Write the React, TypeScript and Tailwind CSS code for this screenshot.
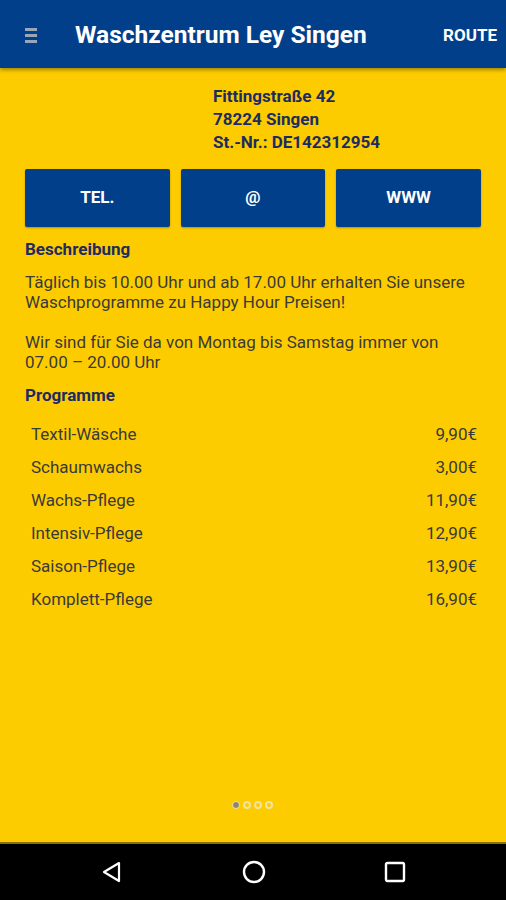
import React from 'react';

const programme: [string, string][] = [
  ['Textil-Wäsche', '9,90€'],
  ['Schaumwachs', '3,00€'],
  ['Wachs-Pflege', '11,90€'],
  ['Intensiv-Pflege', '12,90€'],
  ['Saison-Pflege', '13,90€'],
  ['Komplett-Pflege', '16,90€'],
];

const App: React.FC = () => {
  return (
    <div className="flex h-[900px] w-[506px] flex-col bg-[#fdcc00] font-['Roboto',sans-serif]">
      {/* toolbar */}
      <div className="relative z-10 flex h-[68px] items-center bg-[#023f8a] pt-[3px] shadow-[0_2px_4px_rgba(0,0,0,0.35)]">
        <div className="ml-[25px] flex w-[12px] flex-col gap-[3px]">
          <span className="h-[3px] bg-[#9aa5b8]" />
          <span className="h-[3px] bg-[#9aa5b8]" />
          <span className="h-[3px] bg-[#9aa5b8]" />
        </div>
        <h1 className="ml-[38px] text-[24.5px] font-bold text-white">Waschzentrum Ley Singen</h1>
        <span className="ml-auto mr-[9px] text-[17px] font-bold text-white">ROUTE</span>
      </div>

      <div className="flex flex-1 flex-col px-[25px]">
        <div className="ml-[188px] mt-[17px] text-[17px] font-bold leading-[23px] text-[#1d2b63]">
          <div>Fittingstraße 42</div>
          <div>78224 Singen</div>
          <div>St.-Nr.: DE142312954</div>
        </div>

        <div className="mt-[15px] grid grid-cols-3 gap-[11px]">
          {['TEL.', '@', 'WWW'].map((t) => (
            <button
              key={t}
              className="h-[58px] rounded-[2px] bg-[#023f8a] text-[17px] font-bold text-white shadow-[0_1px_2px_rgba(0,0,0,0.3)]"
            >
              {t}
            </button>
          ))}
        </div>

        <h2 className="mt-[12px] text-[17px] font-bold leading-[20px] text-[#1d2b63]">Beschreibung</h2>
        <p className="mt-[13px] text-[17px] leading-[20px] text-[#3a3a3a]">
          Täglich bis 10.00 Uhr und ab 17.00 Uhr erhalten Sie unsere Waschprogramme zu Happy Hour Preisen!
        </p>
        <p className="mt-[20px] text-[17px] leading-[20px] text-[#3a3a3a]">
          Wir sind für Sie da von Montag bis Samstag immer von 07.00 – 20.00 Uhr
        </p>

        <h2 className="mt-[13px] text-[17px] font-bold leading-[20px] text-[#1d2b63]">Programme</h2>

        <div className="mt-[13px] flex flex-col pl-[6px] pr-[4px]">
          {programme.map(([name, price]) => (
            <div key={name} className="flex h-[33px] items-center justify-between text-[17px] text-[#3a3a3a]">
              <span>{name}</span>
              <span>{price}</span>
            </div>
          ))}
        </div>

        <div className="mt-auto mb-[33px] flex justify-center gap-[3px] pr-[2px]">
          <span className="h-[8px] w-[8px] rounded-full border border-[#f3e3a0] bg-[#8a8470]" />
          <span className="h-[8px] w-[8px] rounded-full border-2 border-[#f3e3a0]" />
          <span className="h-[8px] w-[8px] rounded-full border-2 border-[#f3e3a0]" />
          <span className="h-[8px] w-[8px] rounded-full border-2 border-[#f3e3a0]" />
        </div>
      </div>

      {/* system nav bar */}
      <div className="flex h-[58px] items-center justify-between border-t-2 border-[#8a7200] bg-black px-[100px]">
        <svg width="24" height="24" viewBox="0 0 24 24" fill="none" stroke="#fff" strokeWidth="2.2" strokeLinejoin="round">
          <path d="M19 3 L4 12 L19 21 Z" />
        </svg>
        <svg width="26" height="26" viewBox="0 0 26 26" fill="none" stroke="#fff" strokeWidth="2.4">
          <circle cx="13" cy="13" r="10" />
        </svg>
        <svg width="22" height="22" viewBox="0 0 22 22" fill="none" stroke="#fff" strokeWidth="2.4">
          <rect x="2" y="2" width="18" height="18" rx="1.5" />
        </svg>
      </div>
    </div>
  );
};

export default App;
